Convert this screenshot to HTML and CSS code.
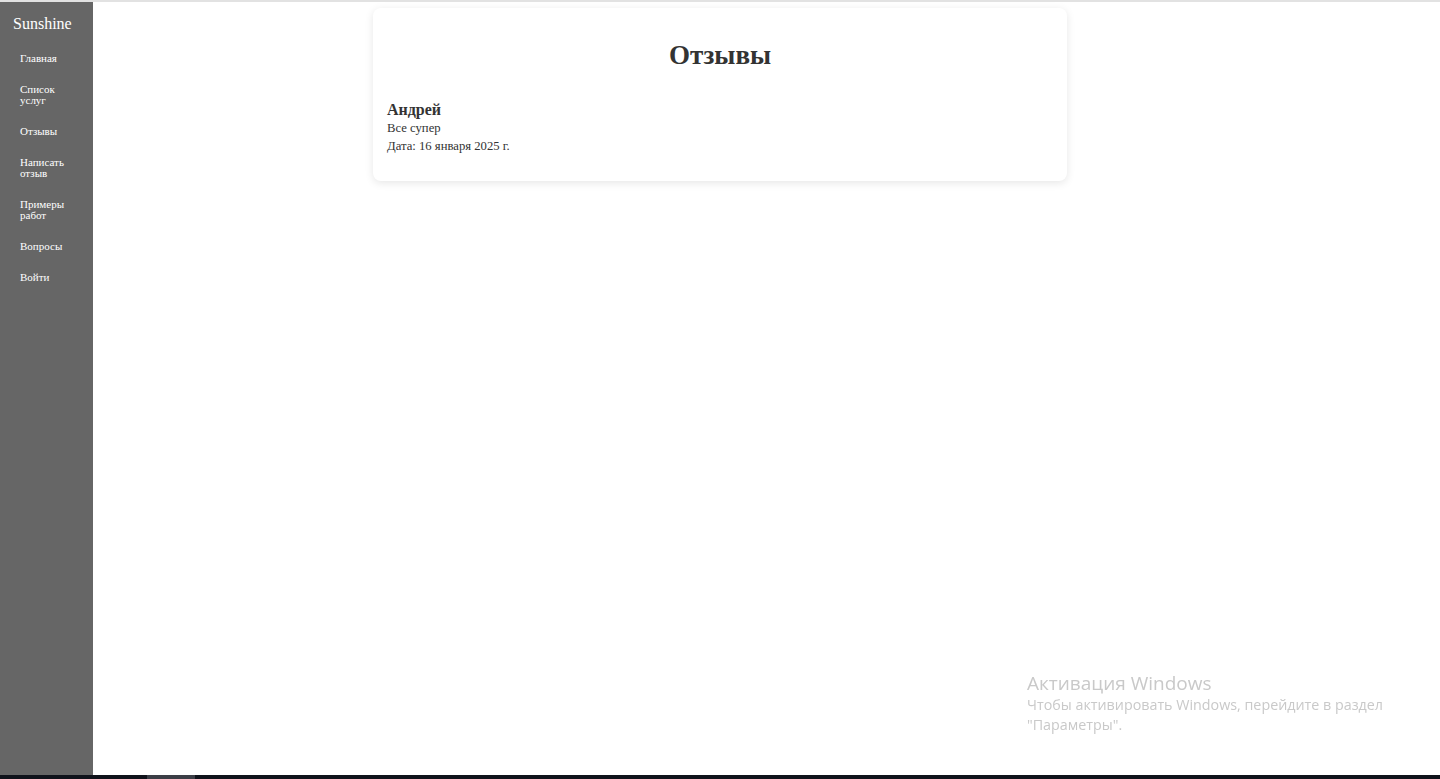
FILE: index.html
```html
<!DOCTYPE html>
<html lang="ru">
<head>
<meta charset="utf-8">
<title>Отзывы</title>
<link rel="stylesheet" href="styles.css">
</head>
<body>
<div class="topline"></div>
<div class="layout">
  <aside class="sidebar">
    <div class="brand">Sunshine</div>
    <nav class="nav">
      <a href="#">Главная</a>
      <a href="#">Список услуг</a>
      <a href="#">Отзывы</a>
      <a href="#">Написать отзыв</a>
      <a href="#">Примеры работ</a>
      <a href="#">Вопросы</a>
      <a href="#">Войти</a>
    </nav>
  </aside>
  <main class="main">
    <section class="card">
      <h2 class="title">Отзывы</h2>
      <div class="review">
        <div class="review-name">Андрей</div>
        <div class="review-text">Все супер</div>
        <div class="review-date">Дата: 16 января 2025 г.</div>
      </div>
    </section>
  </main>
</div>
<div class="taskbar"><span class="taskbar-item"></span></div>
<div class="watermark">
  <div class="wm-title">Активация Windows</div>
  <div class="wm-text">Чтобы активировать Windows, перейдите в раздел<br>"Параметры".</div>
</div>
</body>
</html>
```

FILE: styles.css
```css
* { box-sizing: border-box; }
html, body { margin: 0; padding: 0; height: 100%; }
body {
  font-family: "Liberation Serif", "Times New Roman", serif;
  background: #fff;
  color: #333;
  display: flex;
  flex-direction: column;
  overflow: hidden;
}
.topline { height: 2px; background: #e2e2e2; flex: none; }
.layout { flex: 1; display: flex; min-height: 0; }
.sidebar {
  width: 93px;
  flex: none;
  background: #666;
  color: #fff;
  padding: 13px 0 0 0;
}
.brand {
  font-size: 16px;
  line-height: 18px;
  padding-left: 13px;
  margin-bottom: 10px;
}
.nav { display: flex; flex-direction: column; }
.nav a {
  color: #fff;
  text-decoration: none;
  font-size: 11px;
  line-height: 11px;
  padding: 10px 20px 10px 20px;
}
.main {
  flex: 1;
  padding: 6px 93px 0 0;
}
.card {
  width: 694px;
  margin: 0 auto;
  background: #fff;
  border-radius: 8px;
  box-shadow: 0 2px 8px rgba(0,0,0,0.1);
  padding: 19px 14px 26px 14px;
}
.title {
  margin: 0 0 18px;
  text-align: center;
  font-size: 27px;
  line-height: 56px;
  font-weight: bold;
  color: #333;
}
.review-name { font-size: 16px; font-weight: bold; line-height: 18px; }
.review-text, .review-date { font-size: 12.7px; line-height: 18px; }
.taskbar { height: 4px; background: #10131b; flex: none; position: relative; }
.taskbar-item { position: absolute; left: 147px; top: 0; width: 48px; height: 4px; background: #3b3e46; }
.watermark {
  position: fixed;
  left: 1027px;
  top: 670px;
  color: #c9c9c9;
  font-family: "Open Sans", "Noto Sans", sans-serif;
}
.wm-title { font-size: 19px; line-height: 26px; }
.wm-text { font-size: 14.3px; line-height: 20px; margin-top: -1px; }
```
